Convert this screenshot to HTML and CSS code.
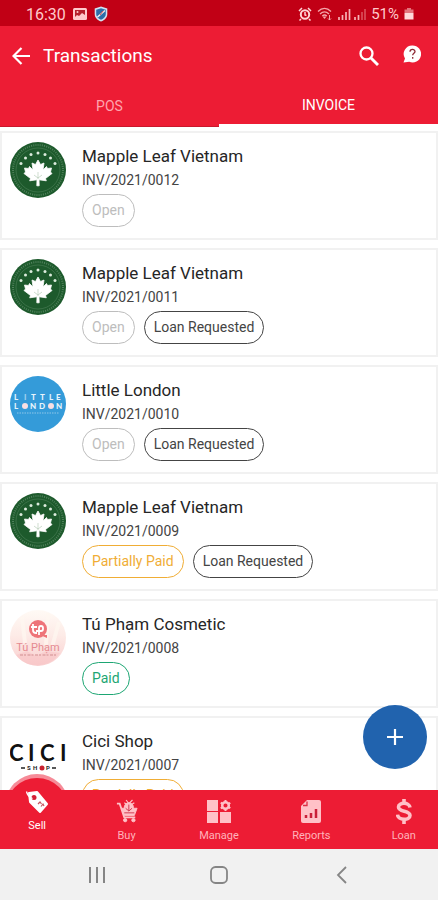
FILE: index.html
```html
<!DOCTYPE html>
<html lang="en">
<head>
<meta charset="utf-8">
<meta name="viewport" content="width=device-width, initial-scale=1">
<title>Transactions</title>
<link rel="stylesheet" href="styles.css">
</head>
<body>
<svg class="defs" aria-hidden="true">
  <symbol id="maple" viewBox="0 0 56 56">
    <circle cx="28" cy="28" r="28" fill="#1d5a2c"/>
    <circle cx="28" cy="28" r="25" fill="none" stroke="#7fa588" stroke-width="2" stroke-dasharray="1 1.2" opacity=".5"/>
    <circle cx="28" cy="28" r="22" fill="none" stroke="#6f9a79" stroke-width=".5" opacity=".7"/>
    <g fill="#dcebdd"><circle cx="11" cy="21.500" r="1.500"/><circle cx="15.500" cy="16" r="1.500"/><circle cx="21" cy="12.500" r="1.500"/><circle cx="28" cy="11" r="1.500"/><circle cx="35" cy="12.500" r="1.500"/><circle cx="40.500" cy="16" r="1.500"/><circle cx="45" cy="21.500" r="1.500"/></g>
    <path d="M28 18l2.500 4.500 3.500-1.500-1 7 3.500-3.500 1 2 4-.5-1 4 1.500 1.500-6.500 5 .8 2.300-7.300-1 .2 6h-2.400l.2-6-7.300 1 .8-2.300-6.500-5 1.500-1.500-1-4 4 .5 1-2 3.500 3.500-1-7 3.500 1.500z" fill="#fff" stroke="#fff" stroke-width=".8" stroke-linejoin="round"/>
    <path d="M28 37v-7M28 36l-4-3M28 36l4-3" stroke="#9dba9f" stroke-width=".5" fill="none"/>
  </symbol>
</svg>
<div class="app">
  <div class="status">
    <div class="status-group">
      <span class="clock">16:30</span>
      <svg width="14" height="14" viewBox="0 0 14 14"><rect y="1" width="14" height="12" rx="1.500" fill="#ffc9cb"/><path d="M2 3h10v5l-3-2-3 3-2-1-2 2z" fill="#b5202c"/><circle cx="4.500" cy="5" r="1" fill="#ffc9cb"/></svg>
      <svg width="14" height="16" viewBox="0 0 14 16"><path d="M7 .5l6.300 2v5.500c0 3.500-2.500 6-6.300 7.500C3.200 14 .7 11.500.7 8V2.500z" fill="#cfe3f2"/><path d="M7 2.200l4.800 1.500V8c0 2.500-1.800 4.500-4.800 5.700C4 12.500 2.200 10.500 2.200 8V3.700z" fill="#2d6da8"/><path d="M3.500 11L11 4.500" stroke="#f3f3f3" stroke-width="1.500"/><path d="M6 9l3-4" stroke="#d34a50"/></svg>
    </div>
    <div class="status-group status-right">
      <svg width="14" height="14" viewBox="0 0 14 14"><circle cx="7" cy="7.500" r="4.200" fill="none" stroke="#ffd5d6" stroke-width="2"/><path d="M7 5v3l1.500.5M1 4l3-3M13 4l-3-3M3 12l-1.500 1.500M11 12l1.500 1.500" stroke="#ffd5d6" stroke-width="1.500" fill="none"/></svg>
      <svg width="16" height="14" viewBox="0 0 16 14" fill="none" stroke="#f5a6ab" stroke-width="1.300"><path d="M1 4.500c4-4 9-4 13 0M3 7c3-2.800 6-2.800 9 0M5.300 9c1.500-1.300 3-1.300 4.500 0"/><path d="M7.500 12l-2-2.500h4z" fill="#f5a6ab" stroke="none"/><path d="M12.500 8v5M11 11.500l1.500 1.500 1.500-1.500" stroke-width="1"/></svg>
      <svg width="28" height="14" viewBox="0 0 28 14"><path d="M1 13v-3M4.500 13V8M8 13V5M11.500 13V2M17 13v-3M20.500 13V8" stroke="#f7b1b5" stroke-width="1.700"/><path d="M24 13V5M27 13V2" stroke="#dc5560" stroke-width="1.500"/></svg>
      <span class="battery">51%</span>
      <svg width="10" height="14" viewBox="0 0 10 14"><path d="M3 1h4v1.500h2.500V6H.5V2.500H3z" fill="#e4737b"/><path d="M.5 6h9v6.500h-9z" fill="#ffd9d9"/></svg>
    </div>
  </div>

  <header class="appbar">
    <button class="icon-btn" aria-label="Back"><svg width="18" height="18" viewBox="0 0 18 18" fill="none" stroke="#fff" stroke-width="2.200"><path d="M18 9H2M9.500 1L1.500 9l8 8"/></svg></button>
    <h1>Transactions</h1>
    <button class="icon-btn" aria-label="Search"><svg width="20" height="20" viewBox="0 0 20 20" fill="none" stroke="#fff"><circle cx="7.500" cy="7.500" r="6" stroke-width="2.300"/><path d="M12 12l7 7" stroke-width="2.900"/></svg></button>
    <button class="icon-btn help" aria-label="Help"><svg width="18" height="18" viewBox="0 0 18 18"><path d="M9.500.5a8.500 8.500 0 1 1-3.300 16.300L.5 17.500l1.500-4A8.500 8.500 0 0 1 9.500.5z" fill="#fff"/><path d="M7 6.800c0-3.200 5-3 5-.3 0 1.800-2.300 1.800-2.300 3.800M9.700 12v1.700" fill="none" stroke="#8d2834" stroke-width="1.300"/></svg></button>
  </header>

  <nav class="tabs" aria-label="Transaction type">
    <a href="#pos" class="tab">POS</a>
    <a href="#invoice" class="tab tab-active">INVOICE</a>
  </nav>

  <main class="list">
    <article class="card">
      <svg class="logo"><use href="#maple"/></svg>
      <div class="info"><h2>Mapple Leaf Vietnam</h2><p>INV/2021/0012</p>
        <div class="chips"><span class="chip open">Open</span></div></div>
    </article>
    <article class="card">
      <svg class="logo"><use href="#maple"/></svg>
      <div class="info"><h2>Mapple Leaf Vietnam</h2><p>INV/2021/0011</p>
        <div class="chips"><span class="chip open">Open</span><span class="chip">Loan Requested</span></div></div>
    </article>
    <article class="card">
      <svg class="logo" viewBox="0 0 56 56"><circle cx="28" cy="28" r="28" fill="#349bd9"/>
        <g class="london"><text x="4" y="24">L</text><text x="14" y="24" opacity=".6">I</text><text x="21" y="24">T</text><text x="30" y="24">T</text><text x="39" y="24">L</text><text x="46" y="24">E</text>
        <text x="4" y="33">L</text><text x="20" y="33">N</text><text x="29" y="33">D</text><text x="46" y="33">N</text></g>
        <g fill="#f8dfe3"><circle cx="15" cy="30" r="3"/><circle cx="41" cy="30" r="3"/></g>
        <path d="M7 37h42" stroke="#b5dbf1" stroke-dasharray="1.500 1" opacity=".7"/></svg>
      <div class="info"><h2>Little London</h2><p>INV/2021/0010</p>
        <div class="chips"><span class="chip open">Open</span><span class="chip">Loan Requested</span></div></div>
    </article>
    <article class="card">
      <svg class="logo"><use href="#maple"/></svg>
      <div class="info"><h2>Mapple Leaf Vietnam</h2><p>INV/2021/0009</p>
        <div class="chips"><span class="chip partial">Partially Paid</span><span class="chip">Loan Requested</span></div></div>
    </article>
    <article class="card">
      <svg class="logo" viewBox="0 0 56 56">
        <defs><linearGradient id="blush" x1="0" y1="0" x2="0" y2="1"><stop offset="0" stop-color="#fffaf5"/><stop offset=".45" stop-color="#fdebe7"/><stop offset="1" stop-color="#f9cfcf"/></linearGradient></defs>
        <circle cx="28" cy="28" r="28" fill="url(#blush)"/>
        <path d="M12 7l3 26M38 3l-2 32M49 12l-7 25" stroke="#fff8f1" stroke-width="4" opacity=".7"/>
        <path d="M6 45l11-4 9 5 10-5 14 2c-10 15-33 17-44 2z" fill="#f7c3c5" opacity=".55"/>
        <circle cx="28" cy="19" r="9" fill="#ee7479"/><path d="M30 25h7v3z" fill="#ee7479"/>
        <path d="M23 14v6q0 3 3 3h1M21 17h6M29 25v-7q0-2 2-2t2 2v1q0 2-2 2h-5" fill="none" stroke="#fff" stroke-width="1.800"/>
        <text class="pham" x="28" y="41" text-anchor="middle">Tú Phạm</text>
        <path d="M10 45h37" stroke="#d99a9c" stroke-width="1.500" stroke-dasharray="3 1 2 1.500" opacity=".8"/></svg>
      <div class="info"><h2>Tú Phạm Cosmetic</h2><p>INV/2021/0008</p>
        <div class="chips"><span class="chip paid">Paid</span></div></div>
    </article>
    <article class="card">
      <svg class="logo" viewBox="0 0 56 56">
        <g class="cici"><text x="-1" y="34">C</text><text x="18" y="34">I</text><text x="30" y="34">C</text><text x="50" y="34">I</text></g>
        <path d="M11 41h4M42 41h4" stroke="#222" stroke-width="1.500"/>
        <g class="cici-sub"><text x="17" y="43">S</text><text x="23" y="43">H</text><text x="36" y="43">P</text></g><circle cx="32" cy="41" r="2.500" fill="#c9202f"/></svg>
      <div class="info"><h2>Cici Shop</h2><p>INV/2021/0007</p>
        <div class="chips"><span class="chip partial">Partially Paid</span></div></div>
    </article>
  </main>

  <footer class="bottom">
    <button class="fab" aria-label="Add transaction"><svg width="18" height="18" viewBox="0 0 18 18"><path d="M9 1v16M1 9h16" stroke="#fff" stroke-width="2.200"/></svg></button>
    <nav class="nav" aria-label="Main">
      <a href="#sell" class="nav-item nav-active">
        <svg class="halo" width="64" height="16" viewBox="0 0 64 16"><circle cx="32" cy="32" r="32" fill="#f68b98"/><circle cx="32" cy="35" r="31" fill="#ed1c34"/></svg>
        <svg width="24" height="24" viewBox="0 0 24 24"><path d="M4 3l8-1 10 12-7 8L5 12z" fill="#fff" stroke="#fff" stroke-width="2" stroke-linejoin="round"/><circle cx="9" cy="7.500" r="2.500" fill="#d51e35"/><path d="M1.500 1.500q1 5 6 7" stroke="#fff" stroke-width="1.300" fill="none"/><path d="M13 14l2-2 1.500 2M16 16.500l2-2.500 1 2" stroke="#c65460" stroke-width="1.200" fill="none"/></svg>
        Sell</a>
      <a href="#buy" class="nav-item">
        <svg width="22" height="26" viewBox="0 0 24 26" fill="none" stroke="#ffc1c7"><path d="M1 5h3l5 15h12" stroke-width="2"/><path d="M6 10h17l-3 8H9z" fill="#ffc1c7"/><circle cx="14" cy="9" r="5" fill="#ffc1c7"/><path d="M11 1l3 4 4-4M9 4l3 2M20 4l-3 2" stroke-width="1.300"/><path d="M14 6v7M10.500 10l3.500 3 3.500-3M9 15h11" stroke="#cf3149"/><circle cx="10" cy="23" r="1.800" fill="#ffc1c7"/><circle cx="19" cy="23" r="1.800" fill="#ffc1c7"/></svg>
        Buy</a>
      <a href="#manage" class="nav-item">
        <svg width="24" height="26" viewBox="0 0 24 26" fill="#ffc1c7"><path d="M0 2h11v11H0zM0 14h11v11H0zM13 14h11v11H13z"/><circle cx="18.500" cy="7.500" r="3.300" fill="none" stroke="#ffc1c7" stroke-width="2.500"/><path d="M18.500 2v2M18.500 11v2M13.700 4.700l2 1.200M21.300 9l2 1.200M13.700 10.300l2-1.200M21.300 6l2-1.200" stroke="#ffc1c7" stroke-width="2"/></svg>
        Manage</a>
      <a href="#reports" class="nav-item">
        <svg width="20" height="26" viewBox="0 0 20 26"><path d="M6 2h12q2 0 2 2v19q0 2-2 2H2q-2 0-2-2V8z" fill="#ffc1c7"/><path d="M2 7.500h4V3.500" fill="none" stroke="#dc2e45" stroke-width="1.300"/><path d="M5 20v-3M10 20v-5M15 20v-9" stroke="#c91f38" stroke-width="2.500"/></svg>
        Reports</a>
      <a href="#loan" class="nav-item">
        <svg width="16" height="26" viewBox="0 0 16 26" fill="none" stroke="#ffc1c7" stroke-width="3.600"><path d="M14 9.500C13.500 4 2.500 4 2.500 9c0 5.500 11.500 3 11.500 8.500 0 5.500-12 5-12.500-.8M8 1v5M8 21v5"/></svg>
        Loan</a>
    </nav>
  </footer>
  <div class="system">
    <button aria-label="Recent apps"><svg width="18" height="18" viewBox="0 0 18 18"><path d="M2 1v16M9 1v16M16 1v16" stroke="#858585" stroke-width="2"/></svg></button>
    <button aria-label="Home"><svg width="18" height="18" viewBox="0 0 18 18"><rect x="1" y="1" width="16" height="16" rx="4.500" fill="none" stroke="#858585" stroke-width="1.800"/></svg></button>
    <button aria-label="System back"><svg width="18" height="18" viewBox="0 0 18 18"><path d="M14 1L6 9l8 8" fill="none" stroke="#858585" stroke-width="1.800"/></svg></button>
  </div>
</div>
</body>
</html>
```
FILE: styles.css
```css
* { box-sizing: border-box; }
body { margin: 0; font-family: Roboto, "Liberation Sans", sans-serif; background: #fff; color: #262626; }
h1, h2, p { margin: 0; font-weight: 400; }
a { text-decoration: none; }
button { border: 0; padding: 0; background: none; font: inherit; display: flex; align-items: center; justify-content: center; }
svg { display: block; flex: none; }
.defs { position: absolute; width: 0; height: 0; }
.app { height: 100vh; display: flex; flex-direction: column; overflow: hidden; }

.status { flex: none; height: 26px; background: #c10015; color: #ffc9cb; display: flex; align-items: center; justify-content: space-between; padding: 2px 24px 0 26px; }
.status-group { display: flex; align-items: center; gap: 7px; }
.status-right { gap: 5px; }
.clock { font-size: 16px; }
.battery { font-size: 15px; }

.appbar { flex: none; height: 60px; background: #ed1c34; color: #fff; display: flex; align-items: center; padding: 0 17px 0 12px; }
.appbar h1 { flex: 1; font-size: 19px; line-height: 24px; margin-left: 13px; }
.help { margin-left: 24px; padding-bottom: 4px; }

.tabs { flex: none; height: 41px; display: flex; background: #ed1c34; }
.tab { flex: 1; display: flex; align-items: center; justify-content: center; font-size: 14px; color: #ffa5ae; border-bottom: 1px solid #c9182c; }
.tab-active { color: #fff; border-bottom: 3px solid #fff; }

.list { flex: 1; min-height: 0; overflow: hidden; display: flex; flex-direction: column; gap: 8px; padding-top: 4px; }
.card { flex: none; min-height: 109px; display: flex; gap: 16px; padding: 9px 8px; border: 2px solid #f1f1f1; background: #fff; }
.logo { width: 56px; height: 56px; }
.info h2 { font-size: 17px; line-height: 28px; }
.info p { font-size: 14px; line-height: 20px; color: #444; }
.chips { display: flex; gap: 9px; margin-top: 4px; }
.chip { height: 33px; line-height: 31px; padding: 0 9px; border: 1px solid #444; border-radius: 17px; font-size: 14px; color: #444; }
.open { color: #bdbdbd; border-color: #bdbdbd; }
.partial { color: #f0ad35; border-color: #f0ad35; }
.paid { color: #1da673; border-color: #1da673; }
.london { font-family: Lato, sans-serif; font-size: 8px; font-weight: 900; fill: #e6f4fc; }
.pham { font-size: 11px; fill: #e58a90; }
.cici { font-family: Lato, sans-serif; font-size: 22px; font-weight: 700; fill: #111; }
.cici-sub { font-size: 6px; font-weight: 700; fill: #222; }

.bottom { flex: none; position: relative; background: #ed1c34; }
.fab { position: absolute; right: 11px; bottom: 80px; width: 64px; height: 64px; border-radius: 50%; background: #2163ae; }
.nav { display: flex; height: 59px; margin: 0 -12px; }
.nav-item { flex: none; width: 20%; display: flex; flex-direction: column; align-items: center; gap: 4px; padding-top: 8px; font-size: 11px; line-height: 16px; color: #ffb3bb; }
.nav-active { position: relative; padding: 0 0 0 6px; color: #fff; }
.halo { position: absolute; bottom: 100%; left: 17px; }
.system { flex: none; height: 51px; display: flex; align-items: center; padding: 0 36px; background: #f1f1f1; }
.system button { flex: 1; }
```
